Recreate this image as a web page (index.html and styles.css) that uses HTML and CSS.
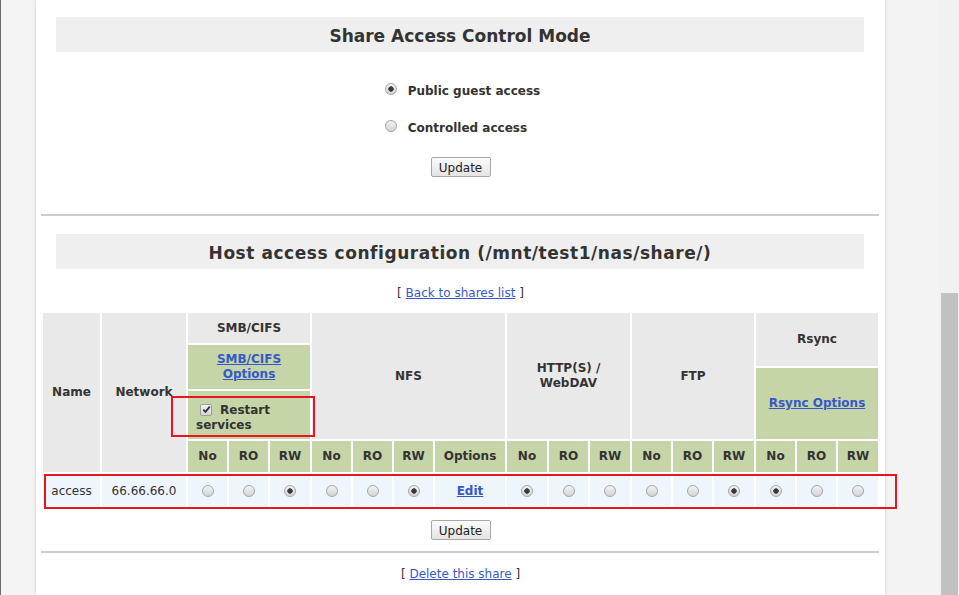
FILE: index.html
```html
<!DOCTYPE html>
<html lang="en">
<head>
<meta charset="utf-8">
<title>Share access</title>
<link rel="stylesheet" href="styles.css">
</head>
<body>
<div class="page">
  <div class="gutter-left"></div>
  <main class="panel">
    <h2 class="bar">Share Access Control Mode</h2>
    <div class="modes">
      <label class="mode"><input class="radio" type="radio" name="mode" checked> Public guest access</label>
      <label class="mode"><input class="radio" type="radio" name="mode"> Controlled access</label>
    </div>
    <div class="actions"><button class="btn" type="button">Update</button></div>
    <hr class="rule">
    <h2 class="bar bar-host">Host access configuration (/mnt/test1/nas/share/)</h2>
    <p class="nav">[ <a href="#">Back to shares list</a> ]</p>

    <div class="access-table">
      <div class="hd gray c-name">Name</div>
      <div class="hd gray c-net">Network</div>
      <div class="hd gray c-smb">SMB/CIFS</div>
      <div class="hd green c-smbopt"><a href="#">SMB/CIFS<br>Options</a></div>
      <div class="hd green c-restart"><span class="check"><svg width="9" height="9" viewBox="0 0 9 9"><path d="M1.3 4.6 L3.5 6.9 L7.8 1.6" fill="none" stroke="#333" stroke-width="1.9"/></svg></span>Restart<br>services</div>
      <div class="hd gray c-nfs">NFS</div>
      <div class="hd gray c-http">HTTP(S) /<br>WebDAV</div>
      <div class="hd gray c-ftp">FTP</div>
      <div class="hd gray c-rsync">Rsync</div>
      <div class="hd green c-rsyncopt"><a href="#">Rsync Options</a></div>

      <div class="hd green sub">No</div>
      <div class="hd green sub">RO</div>
      <div class="hd green sub">RW</div>
      <div class="hd green sub">No</div>
      <div class="hd green sub">RO</div>
      <div class="hd green sub">RW</div>
      <div class="hd green sub">Options</div>
      <div class="hd green sub">No</div>
      <div class="hd green sub">RO</div>
      <div class="hd green sub">RW</div>
      <div class="hd green sub">No</div>
      <div class="hd green sub">RO</div>
      <div class="hd green sub">RW</div>
      <div class="hd green sub">No</div>
      <div class="hd green sub">RO</div>
      <div class="hd green sub">RW</div>

      <div class="cell">access</div>
      <div class="cell">66.66.66.0</div>
      <div class="cell"><input class="radio" type="radio" name="smb"></div>
      <div class="cell"><input class="radio" type="radio" name="smb"></div>
      <div class="cell"><input class="radio" type="radio" name="smb" checked></div>
      <div class="cell"><input class="radio" type="radio" name="nfs"></div>
      <div class="cell"><input class="radio" type="radio" name="nfs"></div>
      <div class="cell"><input class="radio" type="radio" name="nfs" checked></div>
      <div class="cell"><a class="edit" href="#">Edit</a></div>
      <div class="cell"><input class="radio" type="radio" name="http" checked></div>
      <div class="cell"><input class="radio" type="radio" name="http"></div>
      <div class="cell"><input class="radio" type="radio" name="http"></div>
      <div class="cell"><input class="radio" type="radio" name="ftp"></div>
      <div class="cell"><input class="radio" type="radio" name="ftp"></div>
      <div class="cell"><input class="radio" type="radio" name="ftp" checked></div>
      <div class="cell"><input class="radio" type="radio" name="rsync" checked></div>
      <div class="cell"><input class="radio" type="radio" name="rsync"></div>
      <div class="cell"><input class="radio" type="radio" name="rsync"></div>
    </div>

    <div class="actions actions-bottom"><button class="btn" type="button">Update</button></div>
    <hr class="rule rule-bottom">
    <p class="nav nav-bottom">[ <a href="#">Delete this share</a> ]</p>
  </main>
  <div class="gutter-right"></div>
  <div class="scrollbar"><div class="thumb"></div></div>

  <div class="mark mark-restart"></div>
  <div class="mark mark-row"></div>
</div>
</body>
</html>
```

FILE: styles.css
```css
* { box-sizing: border-box; }

html, body {
  margin: 0;
  padding: 0;
  height: 100%;
  overflow: hidden;
}

body {
  font-family: "DejaVu Sans", Verdana, sans-serif;
  font-size: 12px;
  color: #333;
  background: #f4f4f4;
}

.page {
  position: relative;
  display: flex;
  height: 595px;
}

.gutter-left {
  width: 36px;
  flex: none;
  background: #f4f4f4;
  border-left: 1px solid #6a6a6a;
}

.panel {
  width: 849px;
  flex: none;
  background: #fff;
  padding-top: 17px;
  box-shadow: 0 0 3px rgba(0, 0, 0, 0.18);
  position: relative;
  z-index: 1;
}

.gutter-right {
  flex: 1;
  background: #f3f3f3;
}

.scrollbar {
  width: 20px;
  flex: none;
  background: #f1f1f1;
  padding: 293px 1px 0 2px;
}

.thumb {
  height: 302px;
  background: #c1c1c1;
}

.bar {
  margin: 0 21px 0 20px;
  height: 35px;
  padding-top: 3px;
  line-height: 33px;
  background: #efefef;
  font-size: 17px;
  font-weight: bold;
  text-align: center;
  color: #333;
}

.bar-host {
  margin-top: 18px;
  letter-spacing: 0.55px;
}

.modes {
  margin-top: 29px;
  display: flex;
  flex-direction: column;
  align-items: center;
  gap: 17px;
}

.mode {
  display: flex;
  align-items: center;
  width: 152px;
  height: 20px;
  font-weight: bold;
  white-space: pre;
}

.mode .radio { margin: 0 7px 4px 0; }

.actions {
  margin-top: 19px;
  text-align: center;
  height: 20px;
}

.btn {
  font-family: "DejaVu Sans", Verdana, sans-serif;
  font-size: 12px;
  color: #222;
  height: 20px;
  width: 60px;
  padding: 1px 0 0;
  border: 1px solid #a7a7a7;
  border-radius: 2px;
  background: linear-gradient(#fbfbfb, #e4e4e4);
}

.rule {
  margin: 37px 6px 0 5px;
  border: 0;
  height: 2px;
  background: #cccccc;
}

.nav {
  margin: 13px 0 0;
  height: 20px;
  line-height: 22px;
  text-align: center;
}

a { color: #3559c9; }

.access-table {
  margin: 11px 7px 0;
  display: grid;
  grid-template-columns: 57px 84px 39px 39px 40px 39px 39px 39px 70px 40px 39px 40px 39px 39px 40px 39px 39px 40px;
  grid-template-rows: 30px 21px 21px 48px 31px 32px;
  gap: 2px;
}

.hd {
  display: flex;
  align-items: center;
  justify-content: center;
  text-align: center;
  font-weight: bold;
  line-height: 15px;
}

.gray { background: #e9e9e9; }
.green { background: #c5d5a7; }

.hd a { font-weight: bold; }

.c-name { grid-column: 1; grid-row: 1 / 6; }
.c-net { grid-column: 2; grid-row: 1 / 6; }
.c-smb { grid-column: 3 / 6; grid-row: 1; }
.c-smbopt { grid-column: 3 / 6; grid-row: 2 / 4; }
.c-restart {
  grid-column: 3 / 6;
  grid-row: 4;
  text-align: left;
  padding-left: 8px;
  display: block;
  padding-top: 12px;
  line-height: 15px;
}
.c-nfs { grid-column: 6 / 10; grid-row: 1 / 5; }
.c-http { grid-column: 10 / 13; grid-row: 1 / 5; }
.c-ftp { grid-column: 13 / 16; grid-row: 1 / 5; }
.c-rsync { grid-column: 16 / 19; grid-row: 1 / 3; }
.c-rsyncopt { grid-column: 16 / 19; grid-row: 3 / 5; }

.sub { grid-row: 5; }

.check {
  display: inline-flex;
  align-items: center;
  justify-content: center;
  width: 12px;
  height: 12px;
  margin: 0 8px 0 4px;
  vertical-align: 0;
  border: 1px solid #9d9d9d;
  border-radius: 2px;
  background: linear-gradient(#f4f4f4, #d6d6d6);
}

.cell {
  grid-row: 6;
  margin-top: 2px;
  background: #eef5fc;
  display: flex;
  align-items: center;
  justify-content: center;
  text-align: center;
}

.edit { font-weight: bold; }

.radio {
  -webkit-appearance: none;
  appearance: none;
  width: 12px;
  height: 12px;
  margin: 0;
  border-radius: 50%;
  border: 1px solid #a5a5a5;
  background: linear-gradient(#f3f3f3, #d4d4d4);
  flex: none;
}

.radio:checked {
  background: radial-gradient(circle, #3a3a3a 0, #3a3a3a 2.4px, transparent 3px), linear-gradient(#f3f3f3, #d4d4d4);
}

.actions-bottom { margin-top: 14px; }
.rule-bottom { margin-top: 11px; }
.nav-bottom { margin-top: 10px; }

.mark {
  position: absolute;
  border: 2px solid #e8141e;
  z-index: 5;
  pointer-events: none;
}

.mark-restart {
  left: 171px;
  top: 396px;
  width: 144px;
  height: 41px;
}

.mark-row {
  left: 44px;
  top: 474px;
  width: 853px;
  height: 35px;
}
```
